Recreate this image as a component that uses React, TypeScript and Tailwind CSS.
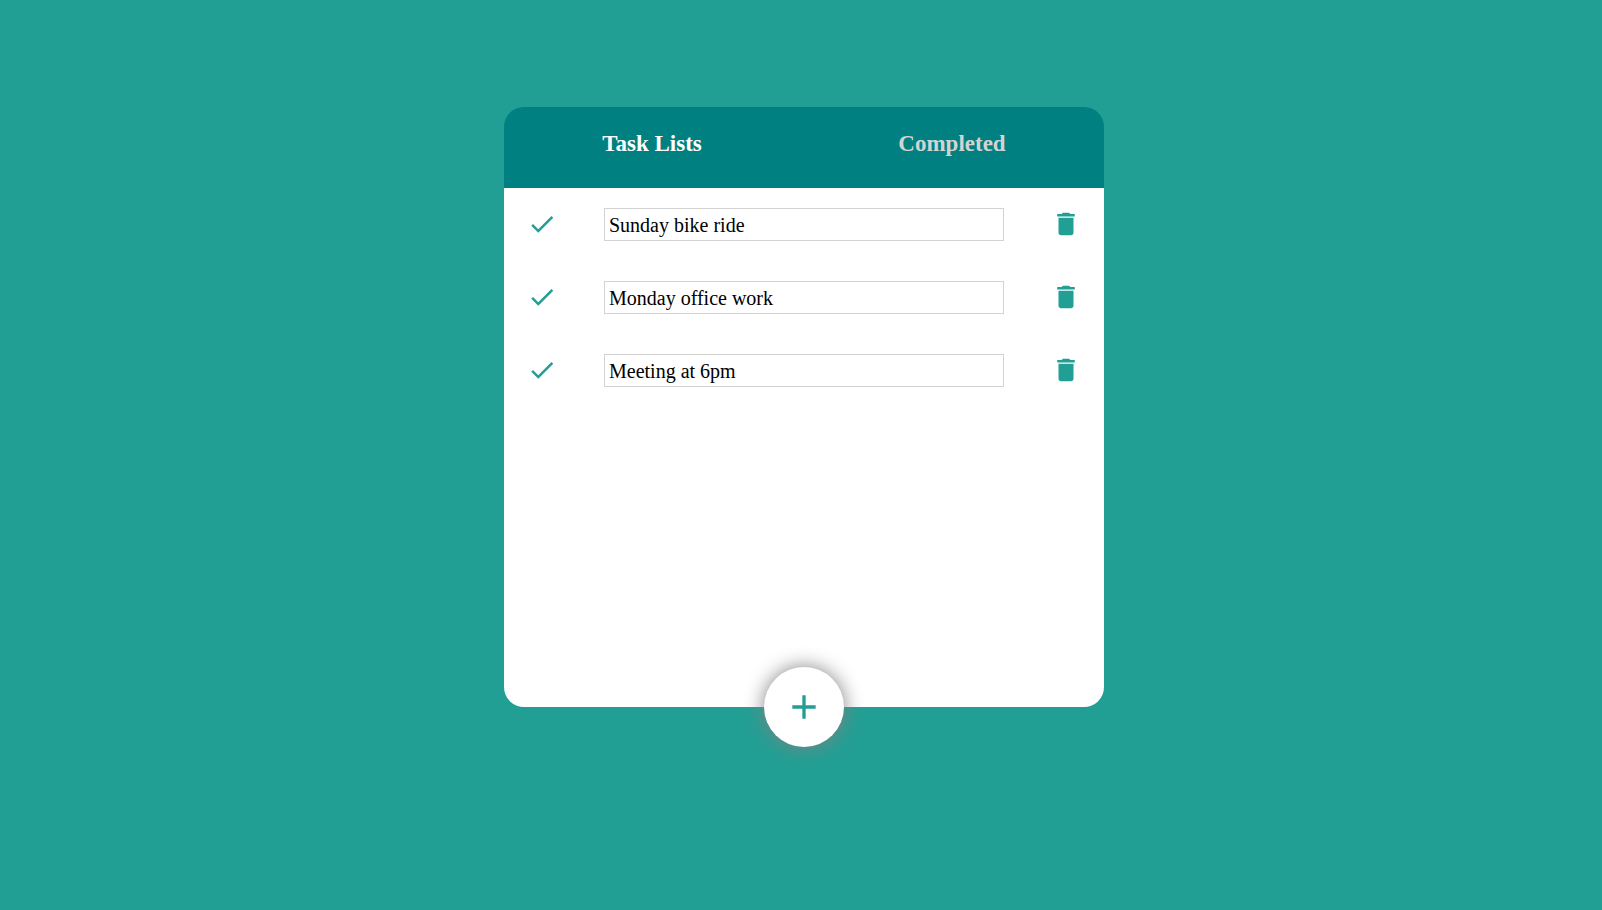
import { useState } from 'react';

const initialTasks = ['Sunday bike ride', 'Monday office work', 'Meeting at 6pm'];

const icons = {
  check: 'M9 16.17L4.83 12l-1.42 1.41L9 19 21 7l-1.41-1.41z',
  trash:
    'M6 19c0 1.1.9 2 2 2h8c1.1 0 2-.9 2-2V7H6v12zM19 4h-3.5l-1-1h-5l-1 1H5v2h14V4z',
  plus: 'M19 13h-6v6h-2v-6H5v-2h6V5h2v6h6v2z',
};

function Icon({ name, className }: { name: keyof typeof icons; className: string }) {
  return (
    <svg viewBox="0 0 24 24" fill="currentColor" aria-hidden="true" className={className}>
      <path d={icons[name]} />
    </svg>
  );
}

type Tab = 'open' | 'done';

export default function App() {
  const [tab, setTab] = useState<Tab>('open');
  const [open, setOpen] = useState<string[]>(initialTasks);
  const [done, setDone] = useState<string[]>([]);

  const items = tab === 'open' ? open : done;
  const setItems = tab === 'open' ? setOpen : setDone;
  const removeAt = (index: number) => setItems(items.filter((_, i) => i !== index));
  const complete = (index: number) => {
    if (tab === 'done') return;
    setDone([...done, open[index]]);
    removeAt(index);
  };

  return (
    <main className="flex min-h-screen items-start justify-center bg-[#229f94] pt-[107px] pb-20 pl-1.5 font-['Liberation_Serif',serif] text-[#229f94]">
      <section className="relative flex min-h-[600px] w-full max-w-[600px] flex-col">
        <header className="grid grid-cols-2 rounded-t-[20px] bg-[#008080] pt-5 pb-[27px] text-[23px] leading-[34px] font-bold">
          <button
            type="button"
            onClick={() => setTab('open')}
            className={tab === 'open' ? 'pr-1 text-white' : 'pr-1 text-[#d3d3d3]'}
          >
            Task Lists
          </button>
          <button
            type="button"
            onClick={() => setTab('done')}
            className={tab === 'done' ? 'pr-1 text-white' : 'pr-1 text-[#d3d3d3]'}
          >
            Completed
          </button>
        </header>

        <ul className="flex-1 rounded-b-[20px] bg-white">
          {items.map((task, index) => (
            <li key={index} className="flex items-start gap-[47px] px-[23px] py-5">
              <button
                type="button"
                aria-label={`Complete ${task}`}
                onClick={() => complete(index)}
                className="flex h-8 items-center"
              >
                <Icon name="check" className="size-[30px]" />
              </button>
              <input
                type="text"
                aria-label={`Task ${index + 1}`}
                value={task}
                onChange={(e) =>
                  setItems(items.map((t, i) => (i === index ? e.target.value : t)))
                }
                className="h-[33px] min-w-0 flex-1 border border-[#d3d3d3] bg-white px-1 pt-0.5 text-[20px] text-black outline-none"
              />
              <button
                type="button"
                aria-label={`Delete ${task}`}
                onClick={() => removeAt(index)}
                className="flex h-8 items-center"
              >
                <Icon name="trash" className="size-[30px]" />
              </button>
            </li>
          ))}
        </ul>

        <button
          type="button"
          aria-label="Add task"
          onClick={() => setOpen([...open, ''])}
          className="absolute bottom-0 left-1/2 flex size-20 -translate-x-1/2 translate-y-1/2 items-center justify-center rounded-full bg-white shadow-[0_0_20px_#808080]"
        >
          <Icon name="plus" className="size-10" />
        </button>
      </section>
    </main>
  );
}
